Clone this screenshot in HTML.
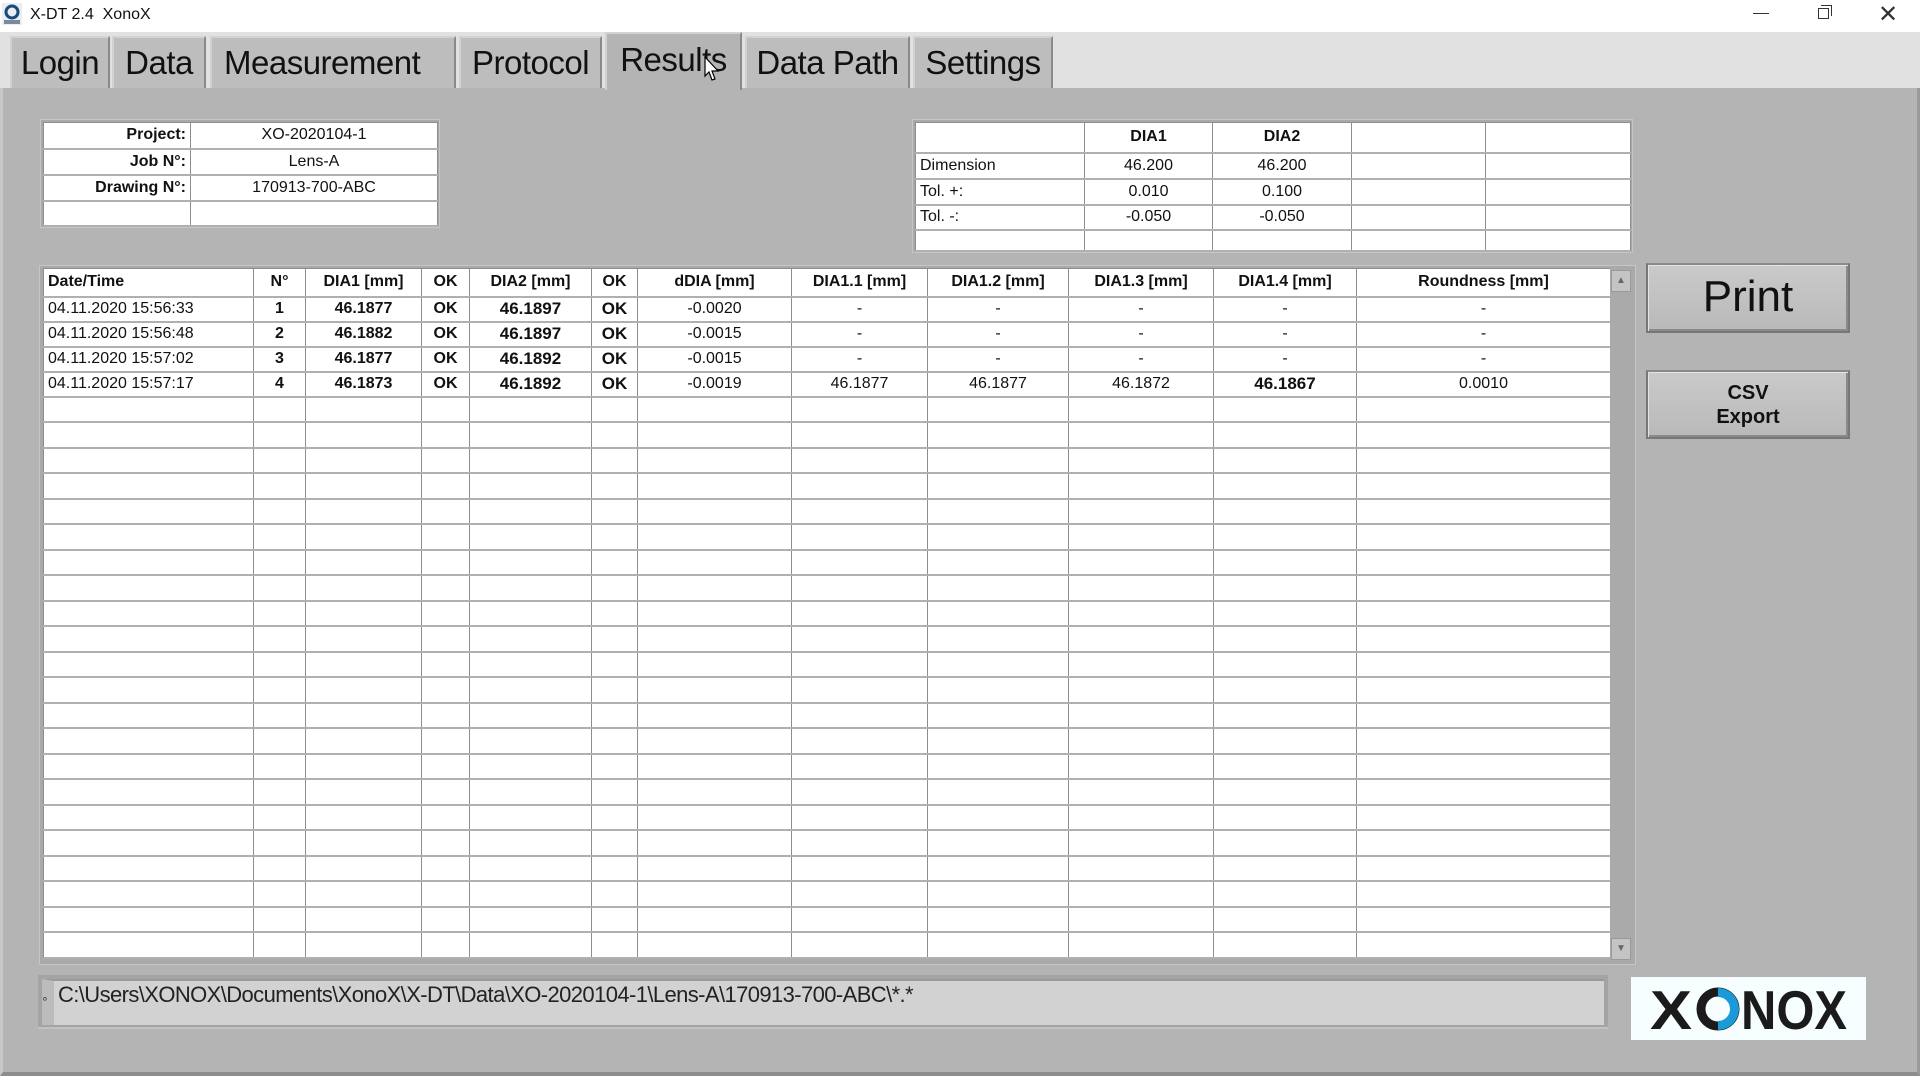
<!DOCTYPE html>
<html><head><meta charset="utf-8">
<style>
*{box-sizing:border-box;margin:0;padding:0}
body{width:1920px;height:1076px;overflow:hidden;background:#b4b4b4;font-family:"Liberation Sans Narrow","Liberation Sans",sans-serif;position:relative;color:#111}
.abs{position:absolute}
#title{left:0;top:0;width:1920px;height:32px;background:#fff}
#tabbar{left:0;top:32px;width:1920px;height:56px;background:#e1e1e1}
.tab{position:absolute;top:36px;height:52px;background:#bdbdbd;border:2px solid #d2d2d2;border-right-color:#8a8a8a;border-bottom:none;font-family:"Liberation Sans",sans-serif;font-size:33px;letter-spacing:-0.5px;line-height:50px;text-align:center;color:#111}
.tab.sel{top:32px;height:58px;background:#b4b4b4;line-height:52px;z-index:3}
#panel{left:0;top:88px;width:1920px;height:988px;background:#b4b4b4;border-left:3px solid #c8c8c8;border-right:3px solid #9a9a9a;border-bottom:4px solid #8d8d8d}
table{border-collapse:collapse;table-layout:fixed;position:absolute;background:#fff}
td{border:1px solid #8e8e8e;border-bottom:2px solid #b0b0b0;font-size:16px;overflow:hidden;white-space:nowrap;padding:0 4px}
.c{text-align:center}.r{text-align:right}.b{font-weight:bold}
.frame{position:absolute;background:#a9a9a9;border:1px solid #c6c6c6}
.btn{position:absolute;background:linear-gradient(#cacaca,#b9b9b9);border:2px solid #777;border-top-color:#8a8a8a;box-shadow:inset 1px 1px 0 #e4e4e4,inset -2px -2px 0 #8a8a8a;text-align:center;font-family:"Liberation Sans",sans-serif;color:#111}
</style></head><body>
<div id="title" class="abs">
 <svg class="abs" style="left:2px;top:3px" width="20" height="22"><rect x="0" y="0" width="20" height="22" fill="#e8eef2"/><circle cx="10" cy="9" r="6" fill="none" stroke="#1a4a7a" stroke-width="3"/><rect x="2" y="17" width="16" height="4" fill="#7a8a9a"/></svg>
 <div class="abs" style="left:30px;top:6px;font-size:16px;font-family:'Liberation Sans Narrow','Liberation Sans',sans-serif">X-DT 2.4&nbsp; XonoX</div>
 <div class="abs" style="left:1753px;top:13px;width:16px;height:1px;background:#333"></div>
 <div class="abs" style="left:1818px;top:8px;width:11px;height:11px;border:1px solid #333"></div>
 <div class="abs" style="left:1821px;top:5px;width:11px;height:11px;border-top:1px solid #333;border-right:1px solid #333"></div>
 <div class="abs" style="left:1878px;top:0px;font-size:24px;font-family:'Liberation Sans',sans-serif;color:#333">✕</div>
</div>
<div id="tabbar" class="abs"></div>
<div class="tab" style="left:10px;width:100px">Login</div>
<div class="tab" style="left:112px;width:94px">Data</div>
<div class="tab" style="left:210px;width:246px;text-align:left;padding-left:12px">Measurement</div>
<div class="tab" style="left:459px;width:143px">Protocol</div>
<div class="tab sel" style="left:605px;width:137px">Results</div>
<div class="tab" style="left:745px;width:165px">Data Path</div>
<div class="tab" style="left:913px;width:140px">Settings</div>
<svg class="abs" style="left:704px;top:56px;z-index:5" width="16" height="26"><path d="M1 1 L1 20 L5 16 L8 24 L11 23 L8 15 L14 15 Z" fill="#fff" stroke="#000" stroke-width="1.2"/></svg>
<div id="panel" class="abs"></div>

<div class="frame" style="left:40px;top:119px;width:400px;height:109px"></div>
<table style="left:43px;top:122px;width:394px">
<colgroup><col style="width:147px"><col style="width:247px"></colgroup>
<tr style="height:26px"><td class="r b">Project:</td><td class="c">XO-2020104-1</td></tr>
<tr style="height:26px"><td class="r b">Job N°:</td><td class="c">Lens-A</td></tr>
<tr style="height:26px"><td class="r b">Drawing N°:</td><td class="c">170913-700-ABC</td></tr>
<tr style="height:25px"><td></td><td></td></tr>
</table>

<div class="frame" style="left:912px;top:119px;width:721px;height:134px"></div>
<table style="left:915px;top:122px;width:715px">
<colgroup><col style="width:169px"><col style="width:128px"><col style="width:139px"><col style="width:134px"><col style="width:145px"></colgroup>
<tr style="height:30px"><td></td><td class="c b">DIA1</td><td class="c b">DIA2</td><td></td><td></td></tr>
<tr style="height:26px"><td>Dimension</td><td class="c">46.200</td><td class="c">46.200</td><td></td><td></td></tr>
<tr style="height:26px"><td>Tol. +:</td><td class="c">0.010</td><td class="c">0.100</td><td></td><td></td></tr>
<tr style="height:25px"><td>Tol. -:</td><td class="c">-0.050</td><td class="c">-0.050</td><td></td><td></td></tr>
<tr style="height:21px"><td></td><td></td><td></td><td></td><td></td></tr>
</table>

<div class="frame" style="left:39px;top:265px;width:1597px;height:700px"></div>
<table style="left:43px;top:268px;width:1567px">
<colgroup><col style="width:210px"><col style="width:52px"><col style="width:116px"><col style="width:48px"><col style="width:122px"><col style="width:46px"><col style="width:154px"><col style="width:136px"><col style="width:141px"><col style="width:145px"><col style="width:143px"><col style="width:254px"></colgroup>
<tr style="height:28px" class="b"><td>Date/Time</td><td class="c">N°</td><td class="c">DIA1 [mm]</td><td class="c">OK</td><td class="c">DIA2 [mm]</td><td class="c">OK</td><td class="c">dDIA [mm]</td><td class="c">DIA1.1 [mm]</td><td class="c">DIA1.2 [mm]</td><td class="c">DIA1.3 [mm]</td><td class="c">DIA1.4 [mm]</td><td class="c">Roundness [mm]</td></tr>
<tr style="height:25px"><td>04.11.2020 15:56:33</td><td class="c b">1</td><td class="c b">46.1877</td><td class="c b">OK</td><td class="c b" style="font-size:17px">46.1897</td><td class="c b" style="font-size:17px">OK</td><td class="c">-0.0020</td><td class="c">-</td><td class="c">-</td><td class="c">-</td><td class="c">-</td><td class="c">-</td></tr>
<tr style="height:25px"><td>04.11.2020 15:56:48</td><td class="c b">2</td><td class="c b">46.1882</td><td class="c b">OK</td><td class="c b" style="font-size:17px">46.1897</td><td class="c b" style="font-size:17px">OK</td><td class="c">-0.0015</td><td class="c">-</td><td class="c">-</td><td class="c">-</td><td class="c">-</td><td class="c">-</td></tr>
<tr style="height:25px"><td>04.11.2020 15:57:02</td><td class="c b">3</td><td class="c b">46.1877</td><td class="c b">OK</td><td class="c b" style="font-size:17px">46.1892</td><td class="c b" style="font-size:17px">OK</td><td class="c">-0.0015</td><td class="c">-</td><td class="c">-</td><td class="c">-</td><td class="c">-</td><td class="c">-</td></tr>
<tr style="height:25px"><td>04.11.2020 15:57:17</td><td class="c b">4</td><td class="c b">46.1873</td><td class="c b">OK</td><td class="c b" style="font-size:17px">46.1892</td><td class="c b" style="font-size:17px">OK</td><td class="c">-0.0019</td><td class="c">46.1877</td><td class="c">46.1877</td><td class="c">46.1872</td><td class="c b" style="font-size:17px">46.1867</td><td class="c">0.0010</td></tr>
<tbody id="empty"></tbody>
</table>
<script>
var tb=document.getElementById('empty'),h='';
for(var i=0;i<22;i++){h+='<tr style="height:25.5px">';for(var j=0;j<12;j++)h+='<td></td>';h+='</tr>';}
tb.innerHTML=h;
</script>
<div class="abs" style="left:1610px;top:268px;width:23px;height:693px;background:#aaa"></div>
<div class="abs" style="left:1611px;top:270px;width:20px;height:22px;background:#c4c4c4;border:1px solid #999;font-size:10px;text-align:center;line-height:20px;color:#666">▲</div>
<div class="abs" style="left:1611px;top:938px;width:20px;height:22px;background:#c4c4c4;border:1px solid #999;font-size:10px;text-align:center;line-height:20px;color:#666">▼</div>

<div class="btn" style="left:1646px;top:263px;width:204px;height:70px;font-size:44px;line-height:64px">Print</div>
<div class="btn" style="left:1646px;top:370px;width:204px;height:69px;font-size:20px;font-weight:bold;line-height:24px;padding-top:9px">CSV<br>Export</div>

<div class="abs" style="left:38px;top:975px;width:1570px;height:54px;background:#a4a4a4;border-bottom:2px solid #c2c2c2"></div>
<div class="abs" style="left:42px;top:979px;width:1562px;height:46px;background:#d2d2d2;border-left:12px solid #bcbcbc;border-top:2px solid #999"></div>
<div class="abs" style="left:43px;top:992px;font-size:10px;font-family:'Liberation Sans',sans-serif">ₒ</div>
<div class="abs" style="left:58px;top:982px;font-size:22px;font-family:'Liberation Sans',sans-serif;letter-spacing:-0.6px;color:#222">C:\Users\XONOX\Documents\XonoX\X-DT\Data\XO-2020104-1\Lens-A\170913-700-ABC\*.*</div>

<div class="abs" style="left:1631px;top:977px;width:235px;height:63px;background:#f6feff"></div>
<svg class="abs" style="left:1631px;top:977px" width="235" height="63">
<text x="19" y="52" font-family="Liberation Sans,sans-serif" font-weight="bold" font-size="55" fill="#1b1b1b" textLength="42" lengthAdjust="spacingAndGlyphs">X</text>
<circle cx="87" cy="32" r="17" fill="none" stroke="#1b1b1b" stroke-width="9"/>
<path d="M87 11 A21 21 0 0 1 87 53 L87 44 A12 12 0 0 0 87 20 Z" fill="#1a9ad8"/>
<path d="M87 11 A21 21 0 0 0 87 53 A14 21 0 0 1 87 11 Z" fill="#1b1b1b"/>
<text x="110" y="52" font-family="Liberation Sans,sans-serif" font-weight="bold" font-size="55" fill="#1b1b1b" textLength="106" lengthAdjust="spacingAndGlyphs">NOX</text>
</svg>
</body></html>
